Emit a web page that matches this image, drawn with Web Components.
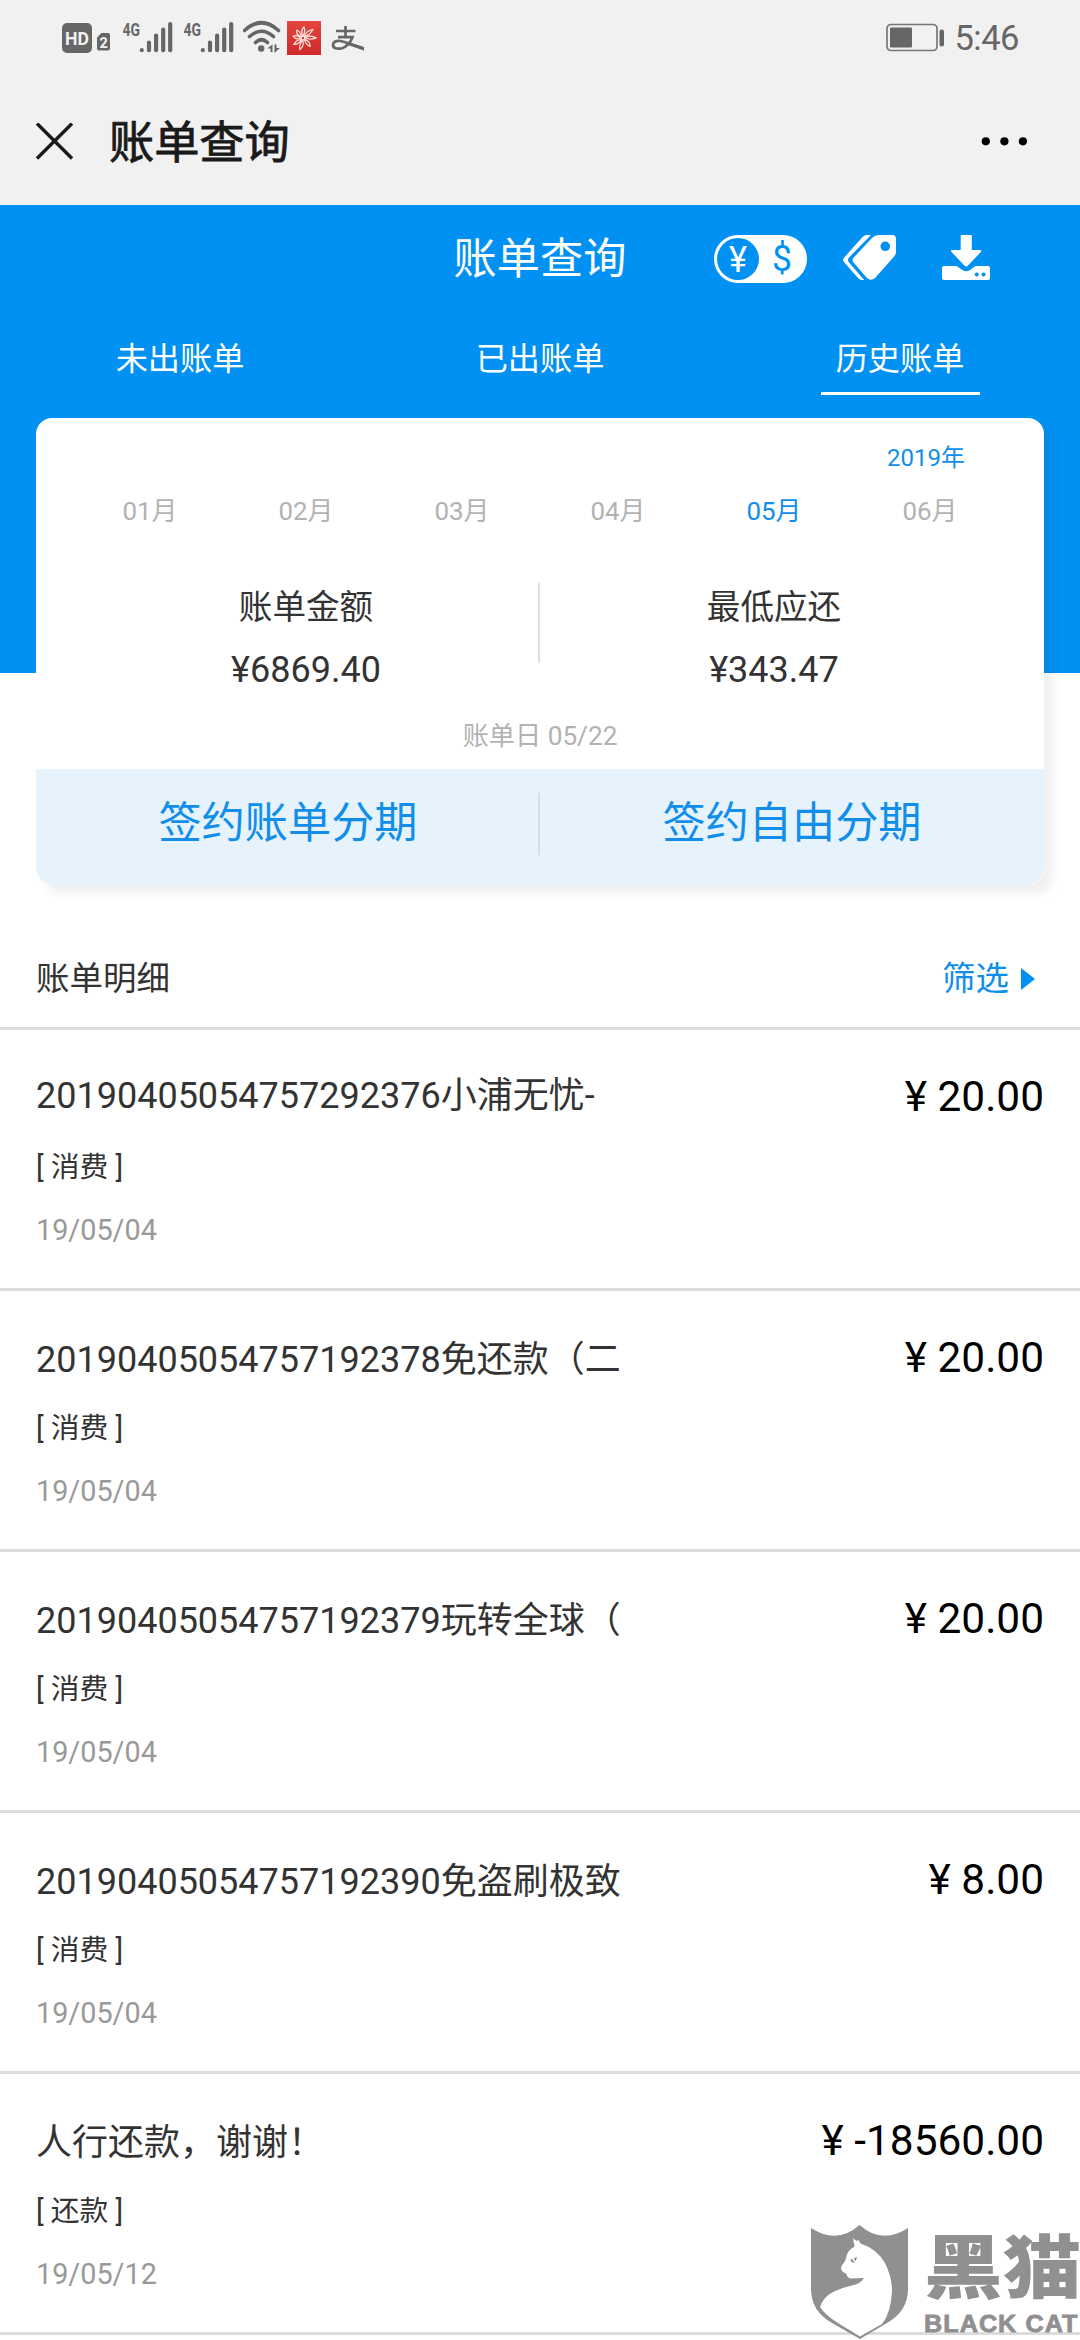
<!DOCTYPE html>
<html lang="zh-CN">
<head>
<meta charset="utf-8">
<title>账单查询</title>
<style>
  html, body { margin: 0; padding: 0; }
  body {
    width: 1080px; height: 2340px; overflow: hidden; position: relative;
    background: #fff; color: #333;
    font-family: Roboto, "Noto Sans CJK SC", sans-serif;
    --blue: #0091f3; --link: #108ee9; --muted: #b2b2b2; --line: #dcdcdc;
  }
</style>
</head>
<body>
<status-bar time="5:46"></status-bar>
<nav-bar>账单查询</nav-bar>
<bill-page>
  <bill-header slot="header">账单查询</bill-header>
  <tab-item slot="tab">未出账单</tab-item>
  <tab-item slot="tab">已出账单</tab-item>
  <tab-item slot="tab" active>历史账单</tab-item>
  <bill-card>
    <span slot="year">2019年</span>
    <month-item slot="month">01月</month-item>
    <month-item slot="month">02月</month-item>
    <month-item slot="month">03月</month-item>
    <month-item slot="month">04月</month-item>
    <month-item slot="month" active>05月</month-item>
    <month-item slot="month">06月</month-item>
    <bill-sum slot="total" label="账单金额">¥6869.40</bill-sum>
    <bill-sum slot="minimum" label="最低应还">¥343.47</bill-sum>
    <span slot="date">账单日 05/22</span>
    <span slot="action-left">签约账单分期</span>
    <span slot="action-right">签约自由分期</span>
  </bill-card>
</bill-page>
<detail-header><span>账单明细</span><span slot="filter">筛选</span></detail-header>
<bill-row style="--title-top:45px" kind="[ 消费 ]" date="19/05/04" amount="¥ 20.00">20190405054757292376小浦无忧-</bill-row>
<bill-row kind="[ 消费 ]" date="19/05/04" amount="¥ 20.00">20190405054757192378免还款（二</bill-row>
<bill-row kind="[ 消费 ]" date="19/05/04" amount="¥ 20.00">20190405054757192379玩转全球（</bill-row>
<bill-row kind="[ 消费 ]" date="19/05/04" amount="¥ 8.00">20190405054757192390免盗刷极致</bill-row>
<bill-row kind="[ 还款 ]" date="19/05/12" amount="¥ -18560.00">人行还款，谢谢！</bill-row>
<cat-mark></cat-mark>

<script>
function define(name, html) {
  const template = document.createElement('template');
  template.innerHTML = html;
  customElements.define(name, class extends HTMLElement {
    constructor() {
      super();
      this.attachShadow({ mode: 'open' }).append(template.content.cloneNode(true));
    }
    connectedCallback() {
      this.shadowRoot.querySelectorAll('[data-attr]').forEach(node => {
        node.textContent = this.getAttribute(node.dataset.attr) || '';
      });
    }
  });
}

define('signal-icon', `
<style>:host{display:block;width:50px;height:42px;margin-top:-7px}svg{display:block}</style>
<svg width="50" height="42" viewBox="0 -7 50 42">
  <text x="-.5" y="15.500" font-family="Roboto" font-size="19" font-weight="700" fill="#666" textLength="17.5" lengthAdjust="spacingAndGlyphs">4G</text>
  <g stroke="#666" stroke-width="4.2" stroke-linecap="round">
    <path d="M18.800 30v0.200M26 22.500v7.700M33.100 15.500v14.700M40.200 9.500v20.700M47.200 4v26.200"/>
  </g>
</svg>`);

define('status-bar', `
<style>
  :host{display:flex;align-items:flex-start;justify-content:space-between;height:76px;background:#f1f1f1;color:#666;box-sizing:border-box;padding:20px 61px 0 62px}
  .left{display:flex;align-items:flex-start}
  .right{display:flex;align-items:flex-start;gap:9px}
  .right svg{margin-top:2px}
  .time{font-size:34.5px;line-height:37px;letter-spacing:-.5px}
  svg{display:block}
  signal-icon{margin-right:11px}
  .marks{margin-left:-2px}
</style>
<div class="left">
  <svg width="61" height="36" viewBox="0 0 61 36">
    <rect x="0" y="3" width="30" height="30" rx="5" fill="#666"/>
    <text x="3" y="24.500" font-family="Roboto" font-size="18.500" font-weight="700" fill="#f1f1f1" textLength="24" lengthAdjust="spacingAndGlyphs">HD</text>
    <path d="M39.500 13H46q2 0 2 2v13.500q0 2-2 2H37q-2 0-2-2V17.500Z" fill="#666"/>
    <text x="37.500" y="28" font-family="Roboto" font-size="14.500" font-weight="700" fill="#f1f1f1">2</text>
  </svg>
  <signal-icon></signal-icon>
  <signal-icon></signal-icon>
  <svg class="marks" width="122" height="36" viewBox="0 0 122 36">
    <g fill="none" stroke="#666" stroke-width="3.600" stroke-linecap="round">
      <path d="M1.500 10.500Q18.500-5 35.500 10.500"/>
      <path d="M6.500 16.500Q18.500 6 30.500 16.500"/><path d="M12.500 22.500Q18.500 17 24.500 22.500"/>
    </g>
    <circle cx="18.200" cy="28.500" r="3.200" fill="#666"/>
    <path d="M29.500 24.500v7.500h-2v-3.500h-3.300zM31.500 24.500h2v3.500h3.300l-5.300 5z" fill="#666"/>
    <defs><linearGradient id="r" x1="0" y1="0" x2="0" y2="1"><stop offset="0" stop-color="#e3463f"/><stop offset="1" stop-color="#d0282b"/></linearGradient></defs>
    <rect x="44" y="1" width="34" height="34" fill="url(#r)"/>
    <g transform="translate(60 18)" fill="none" stroke="#ffe9e2" stroke-width="1.200">
      <path d="M0-2Q-3-7 1-11Q3-7 0-2"/>
      <path d="M0-2Q-3-7 1-13Q3-7 0-2" transform="rotate(45)"/><path d="M0-2Q-3-7 1-13Q3-7 0-2" transform="rotate(85)"/>
      <path d="M0-2Q-3-7 1-11Q3-7 0-2" transform="rotate(135)"/><path d="M0-2Q-3-7 1-12Q3-7 0-2" transform="rotate(190)"/>
      <path d="M0-2Q-3-7 1-11Q3-7 0-2" transform="rotate(230)"/><path d="M0-2Q-3-7 1-10Q3-7 0-2" transform="rotate(275)"/>
      <path d="M0-2Q-3-7 1-10Q3-7 0-2" transform="rotate(315)"/><circle r="1.800"/>
    </g>
    <g fill="none" stroke="#666" stroke-width="2.700">
      <path d="M93 11h19.500M102.500 6v11.500M95 17.200h14.500Q106 26 99 28.200Q90.500 30 90 25Q90.500 20 97.500 21Q104 22.500 120 28.500"/>
    </g>
    <path d="M107 22.500l14 4.500v3.500l-16-5.500z" fill="#666"/>
  </svg>
</div>
<div class="right">
  <svg width="59" height="30" viewBox="0 0 59 30">
    <rect x="1" y="2.500" width="50" height="26" rx="4" fill="none" stroke="#777" stroke-width="1.700"/>
    <rect x="4" y="5.500" width="22" height="20" rx="1" fill="#666"/>
    <rect x="53.500" y="7.500" width="4.500" height="17" rx="2" fill="#666"/>
  </svg>
  <span class="time" data-attr="time"></span>
</div>`);

define('nav-bar', `
<style>
  :host{display:flex;align-items:center;height:129px;background:#f1f1f1;color:#1a1a1a;padding:1px 53px 0 36px;box-sizing:border-box}
  svg{display:block}
  .title{flex:1;margin:5px 0 0 36px;font-size:45.2px;line-height:60px;font-weight:400;-webkit-text-stroke:.8px #1a1a1a}
</style>
<svg width="37" height="37" viewBox="0 0 37 37"><path d="M1 .5L36 35.500M36 .5L1 35.500" stroke="#1a1a1a" stroke-width="3.400"/></svg>
<div class="title"><slot></slot></div>
<svg width="46" height="10" viewBox="0 0 46 10"><circle cx="4.800" cy="5.300" r="4.100"/><circle cx="23.400" cy="5.300" r="4.100"/><circle cx="41.900" cy="5.300" r="4.100"/></svg>`);

define('bill-page', `
<style>
  :host{display:block;background:linear-gradient(var(--blue) 468px,#fff 468px)}
  .tabs{display:flex;height:84px;margin-bottom:23px}
</style>
<slot name="header"></slot>
<div class="tabs"><slot name="tab"></slot></div>
<slot></slot>`);

define('bill-header', `
<style>
  :host{display:grid;grid-template-columns:1fr auto 1fr;align-items:center;height:106px;color:#fff;font-size:43.2px}
  .title{grid-column:2;line-height:60px;margin-top:4px}
  .tools{display:flex;justify-self:end;align-items:flex-start;padding:1px 90px 0 0}
  svg{display:block}
  svg+svg{margin-left:36px}
  svg+svg+svg{margin-left:46px}
</style>
<div class="title"><slot></slot></div>
<div class="tools">
  <svg width="93" height="48" viewBox="0 0 93 48">
    <rect width="93" height="48" rx="24" fill="#fff"/>
    <circle cx="24" cy="24" r="21" fill="var(--blue)"/>
    <text x="24" y="36.500" text-anchor="middle" font-family="Roboto" font-size="36.500" fill="#fff" textLength="18" lengthAdjust="spacingAndGlyphs">¥</text>
    <text x="68" y="36" text-anchor="middle" font-family="Roboto" font-size="37" fill="var(--blue)" textLength="20" lengthAdjust="spacingAndGlyphs">$</text>
  </svg>
  <svg width="53" height="46" viewBox="0 0 53 46">
    <path d="M28 0H24Q21.500 0 19.500 2L1 22.800Q-.7 24.800 1 27L15 43Q16.600 45 19 45H21.200L6 27.500Q4 25 6 22.500Z" fill="#fff"/>
    <path d="M36 0H49Q53 0 53 4V17Q53 19 51.500 21L32.500 42.500Q28 47 23.500 42.500L10.500 27.500Q8.500 25 10.500 22.800L29 3Q32 0 36 0Z" fill="#fff"/>
    <circle cx="42.300" cy="11.300" r="4.800" fill="var(--blue)"/>
  </svg>
  <svg width="48" height="46" viewBox="0 0 48 46">
    <path d="M19.500 0H29Q29.800 0 29.800 1V15H38Q40.200 15.300 38.800 17L25.800 30.700Q24.200 32.300 22.600 30.700L9.500 17Q8.200 15.300 10 15H18.700V1Q18.700 0 19.500 0Z" fill="#fff"/>
    <path d="M2 31H14.500L20.500 35Q24.200 37.500 28 35L33.500 31H46Q48 31 48 33V43Q48 45 46 45H2Q0 45 0 43V33Q0 31 2 31Z" fill="#fff"/>
    <circle cx="34.800" cy="39.500" r="2" fill="var(--blue)"/><circle cx="41.500" cy="39.500" r="2" fill="var(--blue)"/>
  </svg>
</div>`);

define('tab-item', `
<style>
  :host{display:flex;flex:1;justify-content:center;color:#fff;font-size:32.2px}
  div{width:159px;box-sizing:border-box;height:84px;padding-top:31px;line-height:34px;text-align:center;border-bottom:3px solid transparent}
  :host([active]) div{border-color:#fff}
</style>
<div><slot></slot></div>`);

define('month-item', `
<style>:host{display:block;flex:1;text-align:center;color:var(--muted)}:host([active]){color:var(--link)}</style><slot></slot>`);

define('bill-sum', `
<style>
  :host{display:block;text-align:center;color:#333}
  .label{font-size:33.6px;line-height:42px;height:40px}
  .value{font-size:36px;line-height:40px;margin-top:23px}
</style>
<div class="label" data-attr="label"></div><div class="value"><slot></slot></div>`);

define('bill-card', `
<style>
  :host{display:block;height:467px;margin:0 36px;box-sizing:border-box;padding-top:26px;background:#fff;border-radius:16px;box-shadow:9px 9px 10px rgba(30,10,0,.06)}
  .year{height:26px;line-height:28px;font-size:24px;color:var(--link);text-align:right;padding-right:79px}
  .months{display:flex;height:54px;line-height:55px;margin:14px 36px 0;font-size:25.9px}
  .sums{display:flex;margin:45px 36px 0;align-items:flex-start;height:106px}
  .sums>div{flex:1;padding-top:4px}
  .sums>i{width:2px;height:80px;margin-left:-2px;background:#dedede}
  .date{margin-top:33px;height:26px;line-height:29px;text-align:center;font-size:26.2px;color:var(--muted)}
  .actions{display:flex;margin-top:21px;height:116px;background:#e6f3fd;border-radius:0 0 18px 18px;color:var(--link);font-size:43.2px;line-height:109px;text-align:center}
  .actions>div{flex:1}
  .actions>i{width:2px;height:62px;margin:24px 0 0 -2px;background:#cfe0ec}
</style>
<div class="year"><slot name="year"></slot></div>
<div class="months"><slot name="month"></slot></div>
<div class="sums"><div><slot name="total"></slot></div><i></i><div><slot name="minimum"></slot></div></div>
<div class="date"><slot name="date"></slot></div>
<div class="actions"><div><slot name="action-left"></slot></div><i></i><div><slot name="action-right"></slot></div></div>`);

define('detail-header', `
<style>
  :host{display:flex;justify-content:space-between;height:145px;box-sizing:border-box;padding:69px 45px 0 36px;border-bottom:3px solid var(--line);font-size:33.5px;line-height:50px}
  .filter{display:flex;align-items:center;gap:12px;height:49px;color:var(--link)}
  svg{display:block}
</style>
<slot></slot>
<div class="filter"><slot name="filter"></slot><svg width="14" height="22" viewBox="0 0 14 22"><path d="M0 0L14 11L0 22Z" fill="#0091f3"/></svg></div>`);

define('bill-row', `
<style>
  :host{display:flex;justify-content:space-between;height:261px;box-sizing:border-box;padding:0 36px;border-bottom:3px solid var(--line)}
  .info{display:flex;flex-direction:column;height:258px}
  .title{font-size:36px;line-height:42px;height:73px;margin-top:var(--title-top,48px);margin-bottom:calc(48px - var(--title-top,48px));color:#333}
  .kind{font-size:28.8px;line-height:32px;height:64px}
  .date{font-size:28.8px;line-height:30px;color:#999}
  .amount{margin-top:42px;height:50px;line-height:50px;font-size:42.4px;color:#000;white-space:pre}
</style>
<div class="info"><div class="title"><slot></slot></div><div class="kind" data-attr="kind"></div><div class="date" data-attr="date"></div></div>
<div class="amount" data-attr="amount"></div>`);

define('cat-mark', `
<style>
  :host{position:absolute;right:0;bottom:0;display:flex;align-items:flex-start;width:269px;height:115px;color:#918f90}
  svg{display:block}
  .words{display:flex;flex-direction:column;align-items:flex-start;margin-left:15px;width:156px;white-space:nowrap}
  .cn{font:900 69px/90px "Liberation Sans","Noto Sans CJK SC",sans-serif;height:87px;transform:scaleX(1.14);transform-origin:0 0}
  .en{font:700 23.5px/24px "Liberation Sans",sans-serif;letter-spacing:1px;-webkit-text-stroke:.8px #918f90;transform:scaleX(1.07);transform-origin:0 0}
</style>
<svg width="98" height="115" viewBox="0 0 98 115">
  <path d="M0 3Q26 20 48.500 0Q71 20 97 3V64Q97 86 76 98L49 114L21 98Q0 86 0 64Z" fill="#918f90"/>
  <path d="M42 13.500L46 16L47.500 15L49.500 18.500Q66 24 74 38Q81 52 81 66Q80 88 71 99L49 111.500L27 98Q14 90 9 82Q12 72 23 66.500Q31 62.500 41 60.500Q49 59 53 53L39 53.500Q36 52 35 48.500Q32 48 30.500 45Q29.500 43 31 40Q35 36 35.500 31Q37 25 43.500 21.500Z" fill="#fff"/>
  <path d="M39.500 34.500Q43 34 46 31.500Q45.500 36 43 38Q40 37.500 39.500 34.500Z" fill="#918f90"/><path d="M42 33.500l1.800 3.500" stroke="#fff" stroke-width="1.500"/>
</svg>
<div class="words"><span class="cn">黑猫</span><span class="en">BLACK CAT</span></div>`);
</script>
</body>
</html>
